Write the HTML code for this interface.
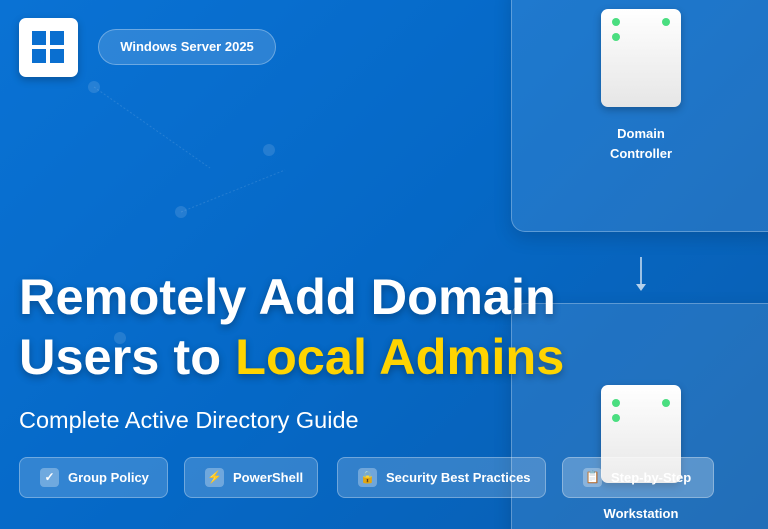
<!DOCTYPE html>
<html style="width:768px;height:529px;overflow:hidden"><head><meta charset="utf-8"><style>
*{margin:0;padding:0;box-sizing:border-box}
body{width:768px;height:529px;overflow:hidden;position:relative;font-family:"Liberation Sans",sans-serif;background:linear-gradient(135deg,#0a72d4 0%,#0568c6 50%,#0a5eb0 100%);color:#fff}
.logo{position:absolute;left:19px;top:18px;width:59px;height:59px;background:#fff;border-radius:7px;box-shadow:0 3px 8px rgba(0,0,0,.25)}
.logo i{position:absolute;width:14px;height:14px;background:#0a6fd0}
.badge{position:absolute;left:98px;top:29px;width:178px;height:36px;border-radius:18px;background:rgba(255,255,255,.15);border:1px solid rgba(255,255,255,.3);font-weight:bold;font-size:13px;line-height:34px;text-align:center}
.dot{position:absolute;width:12px;height:12px;border-radius:50%;background:rgba(255,255,255,.12)}
.card{position:absolute;left:511px;width:290px;border-radius:14px;background:rgba(255,255,255,.1);border:1.5px solid rgba(255,255,255,.28);box-shadow:0 6px 18px rgba(0,0,0,.15)}
.srv{position:absolute;left:601px;width:80px;height:98px;border-radius:7px;background:linear-gradient(#fff,#e6e6e6);box-shadow:0 3px 8px rgba(0,0,0,.25)}
.srv b{position:absolute;width:8px;height:8px;border-radius:50%;background:#4ade80}
.lbl{position:absolute;left:571px;width:140px;text-align:center;font-weight:bold;font-size:13px;line-height:20px}
h1{position:absolute;left:19px;top:267px;font-size:50.5px;line-height:60px;font-weight:bold;text-shadow:0 3px 8px rgba(0,0,0,.3);white-space:nowrap}
h1 span{color:#ffd400}
.sub{position:absolute;left:19px;top:407px;font-size:23.5px}
.pill{position:absolute;top:457px;height:41px;border-radius:8px;background:rgba(255,255,255,.18);border:1px solid rgba(255,255,255,.3);font-weight:bold;font-size:13px;line-height:39px;padding-left:48px}
.pill i{position:absolute;left:20px;top:10px;width:19px;height:19px;border-radius:4px;background:rgba(255,255,255,.3);font-style:normal;font-size:12px;line-height:19px;text-align:center}
</style></head><body>
<svg style="position:absolute;left:0;top:0" width="768" height="529"><path d="M94 87 L210 168 M181 212 L285 170" stroke="rgba(255,255,255,.12)" stroke-width="1" stroke-dasharray="2 2" fill="none"/></svg>
<div class="dot" style="left:88px;top:81px"></div>
<div class="dot" style="left:263px;top:144px"></div>
<div class="dot" style="left:175px;top:206px"></div>
<div class="dot" style="left:114px;top:332px"></div>
<div class="logo"><i style="left:13px;top:13px"></i><i style="left:31px;top:13px"></i><i style="left:13px;top:31px"></i><i style="left:31px;top:31px"></i></div>
<div class="badge">Windows Server 2025</div>
<div class="card" style="top:-20px;height:252px"></div>
<div class="card" style="top:303px;height:240px"></div>
<div style="position:absolute;left:640px;top:257px;width:2px;height:27px;background:rgba(255,255,255,.6)"></div>
<div style="position:absolute;left:636px;top:284px;border-left:5px solid transparent;border-right:5px solid transparent;border-top:7px solid rgba(255,255,255,.7)"></div>
<div class="srv" style="top:9px"><b style="left:11px;top:9px"></b><b style="left:61px;top:9px"></b><b style="left:11px;top:24px"></b></div>
<div class="lbl" style="top:124px">Domain<br>Controller</div>
<div class="srv" style="top:385px"><b style="left:11px;top:14px"></b><b style="left:61px;top:14px"></b><b style="left:11px;top:29px"></b></div>
<div class="lbl" style="top:504px">Workstation</div>
<h1>Remotely Add Domain<br>Users to <span>Local Admins</span></h1>
<div class="sub">Complete Active Directory Guide</div>
<div class="pill" style="left:19px;width:149px"><i>✓</i>Group Policy</div>
<div class="pill" style="left:184px;width:134px"><i style="color:#f59e0b">⚡</i>PowerShell</div>
<div class="pill" style="left:337px;width:209px"><i style="color:#f5a623">🔒</i>Security Best Practices</div>
<div class="pill" style="left:562px;width:152px;background:rgba(255,255,255,.25)"><i>📋</i>Step-by-Step</div>
</body></html>
